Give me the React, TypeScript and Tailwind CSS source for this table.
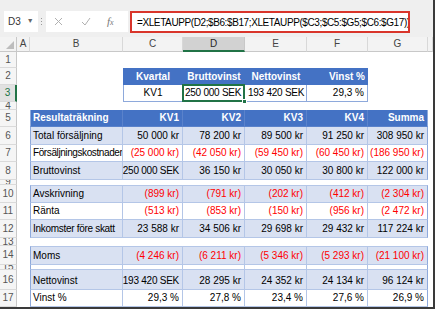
type MainRow = {
  n: number;
  h: string;
  kind: "head" | "blue" | "white" | "gap";
  cells?: string[];
  red?: boolean;
  top?: boolean;
};

const cols = "grid grid-cols-[17px_13px_93px_60px_62px_62px_61px_60px_5px]";

const mainRows: MainRow[] = [
  { n: 4, h: "h-[8px]", kind: "gap" },
  { n: 5, h: "h-[17px]", kind: "head", cells: ["Resultaträkning", "KV1", "KV2", "KV3", "KV4", "Summa"] },
  { n: 6, h: "h-[18px]", kind: "blue", cells: ["Total försäljning", "50 000 kr", "78 200 kr", "89 500 kr", "91 250 kr", "308 950 kr"] },
  { n: 7, h: "h-[17px]", kind: "white", red: true, cells: ["Försäljningskostnader", "(25 000 kr)", "(42 050 kr)", "(59 450 kr)", "(60 450 kr)", "(186 950 kr)"] },
  { n: 8, h: "h-[18px]", kind: "blue", cells: ["Bruttovinst", "250 000 SEK", "36 150 kr", "30 050 kr", "30 800 kr", "122 000 kr"] },
  { n: 9, h: "h-[5px]", kind: "gap" },
  { n: 10, h: "h-[18px]", kind: "blue", red: true, top: true, cells: ["Avskrivning", "(899 kr)", "(791 kr)", "(202 kr)", "(412 kr)", "(2 304 kr)"] },
  { n: 11, h: "h-[17px]", kind: "white", red: true, cells: ["Ränta", "(513 kr)", "(853 kr)", "(150 kr)", "(956 kr)", "(2 472 kr)"] },
  { n: 12, h: "h-[18px]", kind: "blue", cells: ["Inkomster före skatt", "23 588 kr", "34 506 kr", "29 698 kr", "29 432 kr", "117 224 kr"] },
  { n: 13, h: "h-[8px]", kind: "gap" },
  { n: 14, h: "h-[19px]", kind: "blue", red: true, top: true, cells: ["Moms", "(4 246 kr)", "(6 211 kr)", "(5 346 kr)", "(5 293 kr)", "(21 100 kr)"] },
  { n: 15, h: "h-[5px]", kind: "white", cells: ["", "", "", "", "", ""] },
  { n: 16, h: "h-[20px]", kind: "blue", cells: ["Nettovinst", "193 420 SEK", "28 295 kr", "24 352 kr", "24 134 kr", "96 124 kr"] },
  { n: 17, h: "h-[17px]", kind: "white", cells: ["Vinst %", "29,3 %", "27,8 %", "23,4 %", "27,6 %", "26,9 %"] },
];

// long texts get a little tighter so they fit like Calibri does
function tight(t: string) {
  if (t === "Försäljningskostnader") return "tracking-[-0.4px]";
  if (t === "Inkomster före skatt") return "tracking-[-0.3px]";
  if (t.endsWith("SEK")) return "tracking-[-0.25px]";
  return "";
}

function RowHead({ n, active }: { n: number; active?: boolean }) {
  return (
    <div
      className={`flex items-center justify-center overflow-hidden border-b border-b-[#DADADA] text-[10px] leading-none ${
        active
          ? "bg-[#E1E1E1] text-[#217346] border-r-2 border-r-[#217346]"
          : "bg-[#F5F5F5] text-[#555] border-r border-r-[#C8C8C8]"
      }`}
    >
      {n}
    </div>
  );
}

function TableRow({ r }: { r: MainRow }) {
  if (r.kind === "gap" || !r.cells) {
    return (
      <div className={`${cols} ${r.h}`}>
        <RowHead n={r.n} />
      </div>
    );
  }
  return (
    <div className={`${cols} ${r.h}`}>
      <RowHead n={r.n} />
      <div />
      {r.cells.map((t, i) => {
        const head = r.kind === "head";
        const bg = head ? "bg-[#4472C4] text-white font-bold" : r.kind === "blue" ? "bg-[#D9E1F2]" : "bg-white";
        const color = head ? "" : r.red && i > 0 ? "text-[#FF0000]" : "text-black";
        const edge = head ? "border-[#5A82CB]" : "border-[#B4C6E7]";
        return (
          <div
            key={i}
            className={`flex items-end overflow-hidden whitespace-nowrap leading-[12px] pb-[2px] border-b border-r ${edge} ${bg} ${color} ${
              i === 0 ? "justify-start pl-[2px] border-l border-l-[#8EA9DB]" : "justify-end pr-[3px]"
            } ${i === 5 ? "border-r-[#8EA9DB]" : ""} ${r.top ? "border-t border-t-[#B4C6E7]" : ""} ${tight(t)}`}
          >
            {t}
          </div>
        );
      })}
      <div />
    </div>
  );
}

export default function App() {
  return (
    <div className="w-[435px] h-[309px] overflow-hidden bg-white border-r-2 border-b-2 border-[#3A3A3A] font-['Liberation_Sans',Arial,sans-serif] text-[10px] text-black">
      {/* Formula bar */}
      <div className="h-[37px] bg-[#EFEFEF] pt-[11px] flex items-start">
        <div className="ml-[4px] w-[34px] h-[21px] bg-white flex items-center pl-[4px] text-[10px] text-[#333]">
          D3
          <span className="ml-[6px] text-[7px] text-[#666]">▼</span>
        </div>
        <div className="w-[5px] h-[21px] flex flex-col items-center justify-center gap-[2px] ml-[1px]">
          <span className="w-[1px] h-[1px] bg-[#999]" />
          <span className="w-[1px] h-[1px] bg-[#999]" />
          <span className="w-[1px] h-[1px] bg-[#999]" />
        </div>
        <div className="ml-[2px] w-[82px] h-[21px] bg-white flex items-center text-[#A8A8A8]">
          <svg width="9" height="9" viewBox="0 0 9 9" className="ml-[8px]">
            <path d="M1 1L8 8M8 1L1 8" stroke="#B0B0B0" strokeWidth="1" />
          </svg>
          <svg width="10" height="9" viewBox="0 0 10 9" className="ml-[18px]">
            <path d="M1 5L4 8L9 1" stroke="#B0B0B0" strokeWidth="1" fill="none" />
          </svg>
          <span className="ml-[16px] italic font-['Liberation_Serif',serif] text-[11px] text-[#777]">
            f<span className="text-[8px]">x</span>
          </span>
        </div>
        <div className="ml-[2px] w-[280px] h-[22px] bg-white border-2 border-[#D9352B] flex items-center pl-[5px] text-[10px] tracking-[-0.4px] whitespace-nowrap overflow-hidden">
          =XLETAUPP(D2;$B6:$B17;XLETAUPP($C3;$C5:$G5;$C6:$G17))
        </div>
      </div>

      {/* Column headers */}
      <div className={`${cols} h-[15px] bg-[#F3F3F3] text-[#444]`}>
        <div className="flex items-end justify-end pr-[2px] pb-[2px] border-r border-b border-[#C8C8C8]">
          <svg width="8" height="8" viewBox="0 0 8 8">
            <polygon points="8,0 8,8 0,8" fill="#BDBDBD" />
          </svg>
        </div>
        {["A", "B", "C", "D", "E", "F", "G", ""].map((c) => (
          <div
            key={c || "h"}
            className={`flex items-center justify-center text-[10px] leading-none ${
              c === "D"
                ? "bg-[#D2D2D2] text-[#262626] border-b-2 border-b-[#217346] border-r border-r-[#C8C8C8]"
                : "border-b border-b-[#C8C8C8] border-r border-r-[#D8D8D8]"
            }`}
          >
            {c}
          </div>
        ))}
      </div>

      {/* Row 1 */}
      <div className={`${cols} h-[16px]`}>
        <RowHead n={1} />
      </div>

      {/* Row 2: Kvartal header */}
      <div className={`${cols} h-[17px]`}>
        <RowHead n={2} />
        <div />
        <div />
        {["Kvartal", "Bruttovinst", "Nettovinst", "Vinst %"].map((t, i) => (
          <div
            key={t}
            className={`flex items-end pb-[2px] leading-[12px] bg-[#4472C4] text-white font-bold whitespace-nowrap overflow-hidden ${
              i === 3 ? "justify-end pr-[3px]" : "justify-center"
            }`}
          >
            {t}
          </div>
        ))}
      </div>

      {/* Row 3: Kvartal values */}
      <div className={`${cols} h-[17px]`}>
        <RowHead n={3} active />
        <div />
        <div />
        <div className="flex items-end justify-center pb-[2px] leading-[12px] border-l border-r border-b border-[#8EA9DB]">KV1</div>
        <div className="relative flex items-end justify-start pl-[2px] pb-[2px] leading-[12px] border-r border-b border-[#8EA9DB] whitespace-nowrap tracking-[-0.25px]">
          250 000 SEK
          <div className="absolute -left-[1px] -top-[1px] -right-[1px] -bottom-[1px] border-2 border-[#217346]" />
          <div className="absolute -right-[3px] -bottom-[3px] w-[5px] h-[5px] bg-[#217346] border border-white" />
        </div>
        <div className="flex items-end justify-start pl-[3px] pb-[2px] leading-[12px] border-r border-b border-[#8EA9DB] whitespace-nowrap tracking-[-0.25px]">
          193 420 SEK
        </div>
        <div className="flex items-end justify-end pr-[3px] pb-[2px] leading-[12px] border-r border-b border-[#8EA9DB]">29,3 %</div>
      </div>

      {mainRows.map((r) => (
        <TableRow key={r.n} r={r} />
      ))}
    </div>
  );
}
